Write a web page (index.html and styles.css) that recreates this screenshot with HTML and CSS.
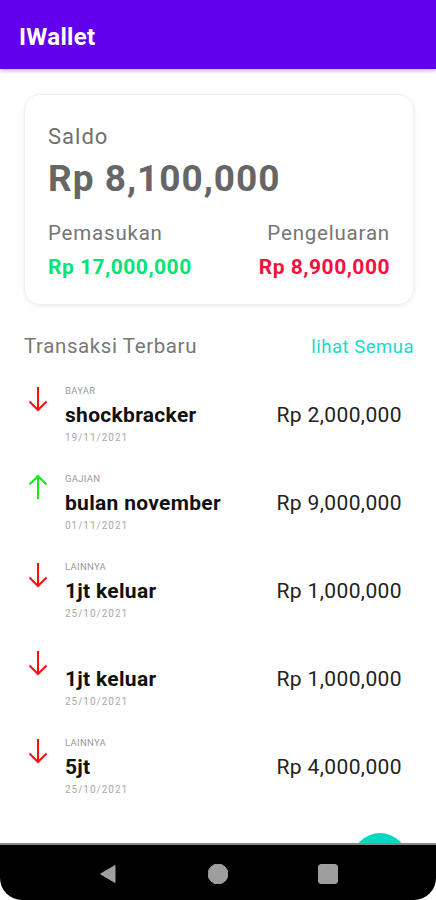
FILE: index.html
```html
<!DOCTYPE html>
<html lang="id">
<head>
    <meta charset="UTF-8">
    <meta name="viewport" content="width=device-width, initial-scale=1.0">
    <title>IWallet</title>
    <link rel="stylesheet" href="styles.css">
</head>
<body>

    <header class="app-bar">IWallet</header>

    <main class="content">
        <div class="balance-card">
            <div class="balance-label">Saldo</div>
            <div class="balance-value">Rp 8,100,000</div>
            <div class="summary">
                <div>
                    <div class="summary-label">Pemasukan</div>
                    <div class="summary-value income">Rp 17,000,000</div>
                </div>
                <div class="summary-right">
                    <div class="summary-label">Pengeluaran</div>
                    <div class="summary-value expense">Rp 8,900,000</div>
                </div>
            </div>
        </div>

        <div class="section-head">
            <span class="section-title">Transaksi Terbaru</span>
            <span class="see-all">lihat Semua</span>
        </div>

        <ul class="transactions">
            <li class="trx">
                <svg class="arrow down" viewBox="0 0 20 26"><path d="M10 1v23M1.5 15.5 10 24l8.5-8.5"/></svg>
                <div class="trx-info">
                    <div class="trx-cat">BAYAR</div>
                    <div class="trx-title">shockbracker</div>
                    <div class="trx-date">19/11/2021</div>
                </div>
                <div class="trx-amount">Rp 2,000,000</div>
            </li>
            <li class="trx">
                <svg class="arrow up" viewBox="0 0 20 26"><path d="M10 25V2M1.5 10.5 10 2l8.5 8.5"/></svg>
                <div class="trx-info">
                    <div class="trx-cat">GAJIAN</div>
                    <div class="trx-title">bulan november</div>
                    <div class="trx-date">01/11/2021</div>
                </div>
                <div class="trx-amount">Rp 9,000,000</div>
            </li>
            <li class="trx">
                <svg class="arrow down" viewBox="0 0 20 26"><path d="M10 1v23M1.5 15.5 10 24l8.5-8.5"/></svg>
                <div class="trx-info">
                    <div class="trx-cat">LAINNYA</div>
                    <div class="trx-title">1jt keluar</div>
                    <div class="trx-date">25/10/2021</div>
                </div>
                <div class="trx-amount">Rp 1,000,000</div>
            </li>
            <li class="trx">
                <svg class="arrow down" viewBox="0 0 20 26"><path d="M10 1v23M1.5 15.5 10 24l8.5-8.5"/></svg>
                <div class="trx-info">
                    <div class="trx-cat"></div>
                    <div class="trx-title">1jt keluar</div>
                    <div class="trx-date">25/10/2021</div>
                </div>
                <div class="trx-amount">Rp 1,000,000</div>
            </li>
            <li class="trx">
                <svg class="arrow down" viewBox="0 0 20 26"><path d="M10 1v23M1.5 15.5 10 24l8.5-8.5"/></svg>
                <div class="trx-info">
                    <div class="trx-cat">LAINNYA</div>
                    <div class="trx-title">5jt</div>
                    <div class="trx-date">25/10/2021</div>
                </div>
                <div class="trx-amount">Rp 4,000,000</div>
            </li>
        </ul>

        <div class="fab"></div>
    </main>

    <nav class="nav-bar">
        <svg class="nav-icon" viewBox="0 0 20 20"><path d="M2.5 10 17 1.5v17z" stroke-linejoin="round"/></svg>
        <svg class="nav-icon" viewBox="0 0 20 20"><circle cx="10" cy="10" r="10"/></svg>
        <svg class="nav-icon" viewBox="0 0 20 20"><rect x="0.5" y="0.5" width="19" height="19" rx="2.5"/></svg>
    </nav>

</body>
</html>
```

FILE: styles.css
```css
* {
    box-sizing: border-box;
}
body {
    margin: 0;
    width: 436px;
    height: 900px;
    overflow: hidden;
    display: flex;
    flex-direction: column;
    font-family: Roboto, "Noto Sans", sans-serif;
    background: #fff;
}
.app-bar {
    height: 69px;
    flex-shrink: 0;
    display: flex;
    align-items: center;
    padding: 4px 0 0 19px;
    background: #6200ee;
    color: #fff;
    font-size: 24px;
    letter-spacing: 0.3px;
    font-weight: 700;
    box-shadow: 0 2px 4px rgba(98, 0, 238, 0.3);
    position: relative;
    z-index: 1;
}
.content {
    flex: 1;
    position: relative;
    padding: 25px 22px 0 24px;
}
.balance-card {
    border-radius: 16px;
    border: 1px solid #f0f0f0;
    box-shadow: 0 1px 4px rgba(0, 0, 0, 0.08);
    padding: 29px 23px 24px;
}
.balance-label {
    font-size: 22px;
    line-height: 26px;
    letter-spacing: 1px;
    color: #6f6f6f;
}
.balance-value {
    margin-top: 7px;
    font-size: 37px;
    line-height: 44px;
    letter-spacing: 1px;
    font-weight: 700;
    color: #666;
}
.summary {
    display: flex;
    justify-content: space-between;
    margin-top: 20px;
}
.summary-right {
    text-align: right;
}
.summary-label {
    font-size: 20.5px;
    line-height: 24px;
    letter-spacing: 0.8px;
    color: #757575;
}
.summary-value {
    margin-top: 9px;
    font-size: 21px;
    line-height: 26px;
    letter-spacing: 0.5px;
    font-weight: 700;
}
.income {
    color: #00e676;
}
.expense {
    color: #f5103f;
}
.section-head {
    display: flex;
    justify-content: space-between;
    align-items: baseline;
    margin-top: 29px;
}
.section-title {
    font-size: 20.5px;
    line-height: 24px;
    letter-spacing: 0.6px;
    color: #777;
}
.see-all {
    font-size: 18.5px;
    letter-spacing: 0.5px;
    color: #1ad9c6;
}
.transactions {
    list-style: none;
    margin: 26px 0 0;
    padding: 0;
}
.trx {
    display: flex;
    height: 88px;
    align-items: flex-start;
}
.arrow {
    width: 20px;
    height: 26px;
    margin: 2px 17px 0 4px;
    fill: none;
    stroke-width: 2;
    flex-shrink: 0;
}
.arrow.down {
    stroke: #ff0d0d;
}
.arrow.up {
    stroke: #10ee10;
}
.trx-info {
    flex: 1;
}
.trx-cat {
    height: 13px;
    font-size: 9.5px;
    line-height: 13px;
    letter-spacing: 0.3px;
    color: #9a9a9a;
}
.trx-title {
    margin-top: 6px;
    font-size: 21px;
    line-height: 25px;
    letter-spacing: 0.3px;
    font-weight: 700;
    color: #111;
}
.trx-date {
    margin-top: 3px;
    font-size: 10px;
    line-height: 13px;
    letter-spacing: 1px;
    color: #a8a8a8;
}
.trx-amount {
    margin: 19px 12px 0 0;
    font-size: 21px;
    line-height: 25px;
    letter-spacing: 0.4px;
    color: #222;
}
.fab {
    position: absolute;
    right: 28px;
    bottom: -46px;
    width: 56px;
    height: 56px;
    border-radius: 50%;
    background: #03dac5;
}
.nav-bar {
    height: 57px;
    flex-shrink: 0;
    position: relative;
    z-index: 2;
    display: flex;
    justify-content: center;
    align-items: center;
    gap: 90px;
    padding-top: 2px;
    background: #000;
    border-top: 2px solid #8a8a8a;
    border-radius: 0 0 22px 22px;
}
.nav-icon {
    width: 20px;
    height: 20px;
    fill: #9e9e9e;
    stroke: #9e9e9e;
}
```
